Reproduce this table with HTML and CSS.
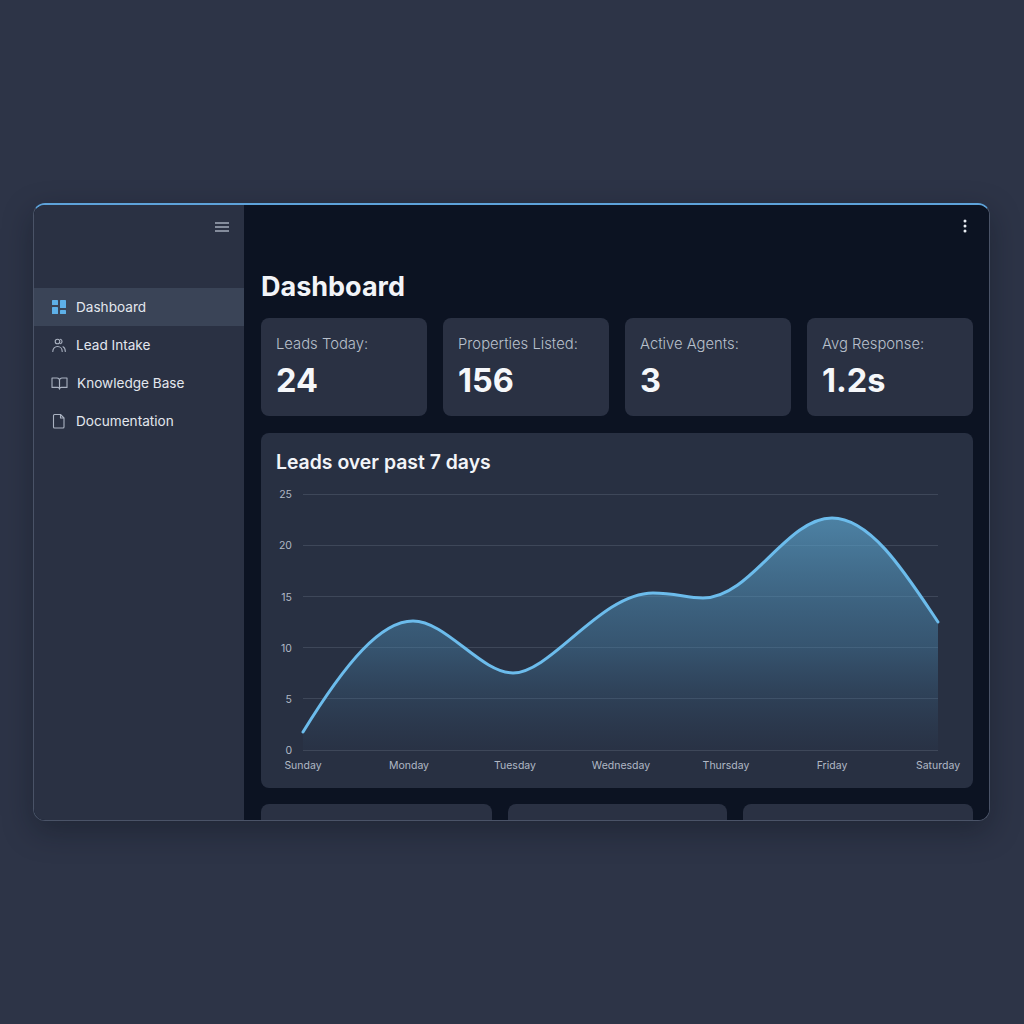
FILE: index.html
```html
<!DOCTYPE html>
<html lang="en">
<head>
<meta charset="utf-8">
<title>Dashboard</title>
<link rel="stylesheet" href="styles.css">
</head>
<body>
<div class="window">
  <aside class="sidebar">
    <div class="side-top">
      <svg class="hamburger" width="14" height="10" viewBox="0 0 14 10"><path d="M0 1h14M0 5h14M0 9h14" stroke="#a3abbb" stroke-width="1.4"/></svg>
    </div>
    <nav class="nav">
      <div class="nav-item active">
        <svg class="nav-icon" width="16" height="16" viewBox="0 0 16 16"><rect x="1" y="1" width="6" height="5" rx="0.6" fill="#5eb0e8"/><rect x="1" y="8" width="6" height="7" rx="0.6" fill="#5eb0e8"/><rect x="9" y="1" width="6" height="8" rx="0.6" fill="#5eb0e8"/><rect x="9" y="11" width="6" height="4" rx="0.6" fill="#5eb0e8"/></svg>
        <span>Dashboard</span>
      </div>
      <div class="nav-item">
        <svg class="nav-icon" width="16" height="16" viewBox="0 0 16 16" fill="none" stroke="#aab2c1" stroke-width="1.1" stroke-linecap="round"><circle cx="6.5" cy="4.5" r="2.3"/><path d="M1.8 14.5c0-3 2.1-5 4.7-5s4.7 2 4.7 5"/><path d="M9.4 2.3a2.3 2.3 0 0 1 0 4.4"/><path d="M12 9.8c1.4.7 2.3 2.4 2.3 4.7"/></svg>
        <span>Lead Intake</span>
      </div>
      <div class="nav-item">
        <svg class="nav-icon" width="17" height="16" viewBox="0 0 17 16" fill="none" stroke="#aab2c1" stroke-width="1.1" stroke-linejoin="round"><path d="M1 3h5a2.5 2.5 0 0 1 2.5 2.5V14a1.8 1.8 0 0 0-1.8-1.6H1z"/><path d="M16 3h-5a2.5 2.5 0 0 0-2.5 2.5V14a1.8 1.8 0 0 1 1.8-1.6H16z"/></svg>
        <span>Knowledge Base</span>
      </div>
      <div class="nav-item">
        <svg class="nav-icon" width="16" height="16" viewBox="0 0 16 16" fill="none" stroke="#aab2c1" stroke-width="1.1" stroke-linejoin="round"><path d="M3.5 1.5h6l3.5 3.5v9a1 1 0 0 1-1 1h-8.5a1 1 0 0 1-1-1v-11.5a1 1 0 0 1 1-1z"/><path d="M9.5 1.5v3.5h3.5"/></svg>
        <span>Documentation</span>
      </div>
    </nav>
  </aside>
  <main class="main">
    <div class="topbar">
      <svg class="kebab" width="4" height="14" viewBox="0 0 4 14"><circle cx="2" cy="2" r="1.5" fill="#e8ecf2"/><circle cx="2" cy="7" r="1.5" fill="#e8ecf2"/><circle cx="2" cy="12" r="1.5" fill="#e8ecf2"/></svg>
    </div>
    <h1 class="title">Dashboard</h1>
    <section class="stats">
      <div class="stat"><div class="stat-label">Leads Today:</div><div class="stat-value">24</div></div>
      <div class="stat"><div class="stat-label">Properties Listed:</div><div class="stat-value">156</div></div>
      <div class="stat"><div class="stat-label">Active Agents:</div><div class="stat-value">3</div></div>
      <div class="stat"><div class="stat-label">Avg Response:</div><div class="stat-value">1.2s</div></div>
    </section>
    <section class="chart-card">
      <h2 class="chart-title">Leads over past 7 days</h2>
      <svg class="chart" width="712" height="314" viewBox="0 0 712 314">
        <defs>
          <linearGradient id="area" gradientUnits="userSpaceOnUse" x1="0" y1="44" x2="0" y2="276">
            <stop offset="0" stop-color="#5ea8d2" stop-opacity="0.68"/>
            <stop offset="0.55" stop-color="#4a88b0" stop-opacity="0.42"/>
            <stop offset="1" stop-color="#3a6488" stop-opacity="0.04"/>
          </linearGradient>
        </defs>
        <g stroke="#3e4759" stroke-width="1">
          <line x1="42" y1="20.5" x2="677" y2="20.5"/>
          <line x1="42" y1="71.5" x2="677" y2="71.5"/>
          <line x1="42" y1="122.5" x2="677" y2="122.5"/>
          <line x1="42" y1="173.5" x2="677" y2="173.5"/>
          <line x1="42" y1="224.5" x2="677" y2="224.5"/>
          <line x1="42" y1="276.5" x2="677" y2="276.5"/>
        </g>
        <g class="ylab" text-anchor="end">
          <text x="31" y="24">25</text>
          <text x="31" y="75">20</text>
          <text x="31" y="127">15</text>
          <text x="31" y="178">10</text>
          <text x="31" y="229">5</text>
          <text x="31" y="280">0</text>
        </g>
        <path d="M42,258 C85,188 120,147 152,147 C185,147 220,199 252,199 C290,199 340,119 392,119 C415,119 425,124 442,124 C490,124 525,44 571,44 C610,44 645,100 677,148 L677,276 L42,276 Z" fill="url(#area)"/>
        <path d="M42,258 C85,188 120,147 152,147 C185,147 220,199 252,199 C290,199 340,119 392,119 C415,119 425,124 442,124 C490,124 525,44 571,44 C610,44 645,100 677,148" fill="none" stroke="#6cbcec" stroke-width="3" stroke-linecap="round"/>
        <g class="xlab" text-anchor="middle">
          <text x="42" y="295">Sunday</text>
          <text x="148" y="295">Monday</text>
          <text x="254" y="295">Tuesday</text>
          <text x="360" y="295">Wednesday</text>
          <text x="465" y="295">Thursday</text>
          <text x="571" y="295">Friday</text>
          <text x="677" y="295">Saturday</text>
        </g>
      </svg>
    </section>
    <section class="bottom">
      <div class="mini"></div>
      <div class="mini"></div>
      <div class="mini"></div>
    </section>
  </main>
</div>
</body>
</html>
```
FILE: styles.css
```css
* { box-sizing: border-box; }
html, body { margin: 0; }
body {
  background: #2d3447;
  font-family: Inter, "Noto Sans", "Liberation Sans", sans-serif;
  padding: 203px 0 0 33px;
  height: 1024px;
  overflow: hidden;
}
.window {
  width: 957px;
  height: 618px;
  display: flex;
  border: 1px solid #4a5367;
  border-top: 2px solid #5ea3da;
  border-radius: 12px;
  overflow: hidden;
  box-shadow: 0 10px 30px rgba(10, 14, 24, 0.35);
  background: #0c1322;
}
.sidebar {
  width: 210px;
  flex: none;
  background: #2a3143;
  display: flex;
  flex-direction: column;
}
.side-top {
  height: 83px;
  display: flex;
  justify-content: flex-end;
  align-items: flex-start;
  padding: 17px 15px 0 0;
}
.hamburger { display: block; }
.nav { display: flex; flex-direction: column; }
.nav-item {
  height: 38px;
  display: flex;
  align-items: center;
  gap: 9px;
  padding-left: 17px;
  color: #e3e7ee;
  font-size: 13.6px;
}
.nav-item.active { background: #3a4457; }
.nav-icon { flex: none; display: block; }
.main {
  flex: 1;
  background: #0c1322;
  padding: 0 16px 0 17px;
  overflow: hidden;
}
.topbar {
  height: 42px;
  display: flex;
  justify-content: flex-end;
  align-items: center;
  padding-right: 6px;
}
.kebab { display: block; }
.title {
  margin: 24px 0 15px;
  font-size: 27px;
  line-height: 32px;
  font-weight: 700;
  color: #f2f4f8;
}
.stats {
  display: grid;
  grid-template-columns: repeat(4, 1fr);
  gap: 16px;
}
.stat {
  height: 98px;
  background: #2a3143;
  border-radius: 8px;
  padding: 16px 15px 0;
}
.stat-label {
  font-size: 14.8px;
  line-height: 20px;
  font-weight: 300;
  color: #b8c0cc;
}
.stat-value {
  margin-top: 8px;
  font-size: 32.5px;
  line-height: 38px;
  font-weight: 700;
  color: #f5f7fa;
}
.chart-card {
  margin-top: 17px;
  height: 355px;
  background: #283042;
  border-radius: 8px;
  padding-top: 17px;
}
.chart-title {
  margin: 0 0 0 15px;
  font-size: 19.4px;
  line-height: 24px;
  font-weight: 600;
  color: #f2f4f8;
}
.chart { display: block; }
.ylab text, .xlab text {
  font-family: Inter, "Noto Sans", "Liberation Sans", sans-serif;
  font-size: 10.5px;
  fill: #b0b8c5;
}
.bottom {
  margin-top: 16px;
  display: grid;
  grid-template-columns: 231px 219px 1fr;
  gap: 16px;
}
.mini {
  height: 60px;
  background: #2a3143;
  border-radius: 8px;
}
```
